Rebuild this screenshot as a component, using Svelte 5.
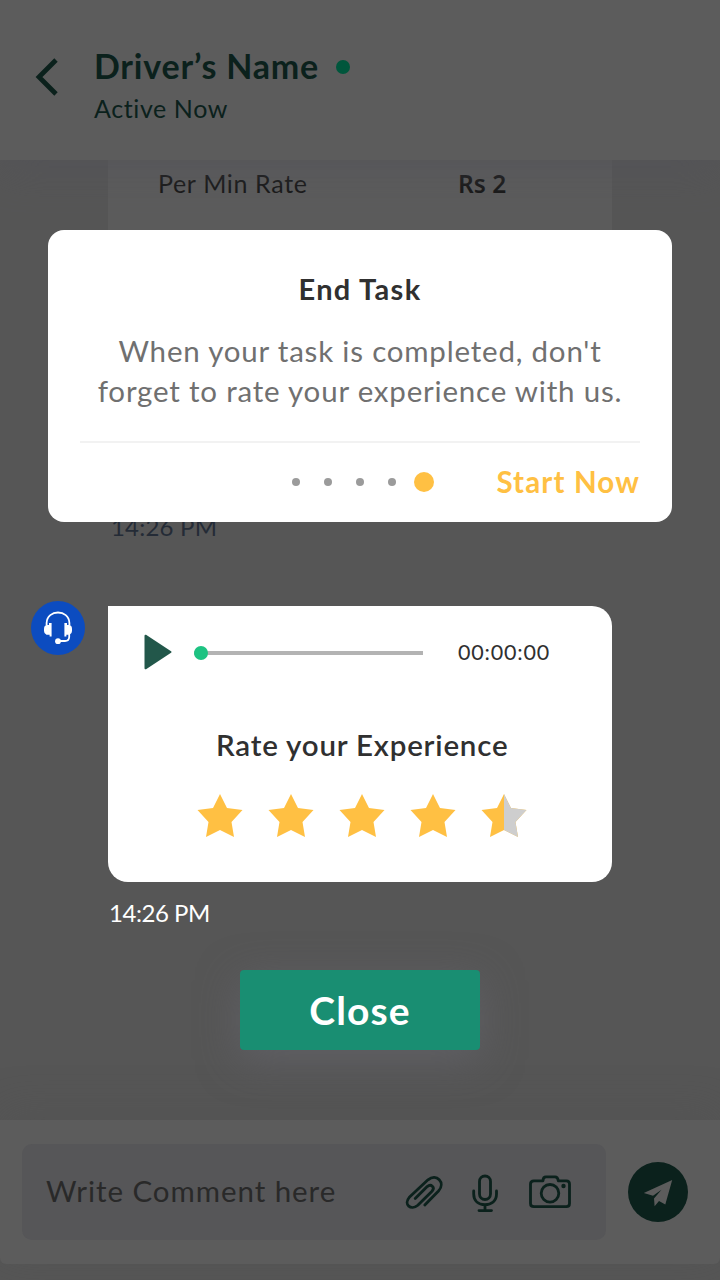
<script>
  const stars = [1, 1, 1, 1, 0.5];
  const steps = [0, 1, 2, 3];
  const starPath = 'M23 0 L30 14 L45.5 16 L34.5 28 L37 43 L23 36 L9 43 L11.5 28 L0.5 16 L16 14 Z';
</script>

<div class="screen">
  <div class="base">
    <header>
      <svg class="back" width="24" height="40" viewBox="0 0 24 40"><path d="M21 3 L4 20 L21 37" fill="none" stroke="#0b211c" stroke-width="4.8" /></svg>
      <div class="who">
        <div class="name-row"><h1>Driver’s Name</h1><i class="online"></i></div>
        <p class="status">Active Now</p>
      </div>
    </header>
    <main>
      <div class="rate"><span class="label">Per Min Rate</span><b>Rs 2</b></div>
      <p class="old-time">14:26 PM</p>
    </main>
    <footer>
      <div class="field">
        <span class="hint">Write Comment here</span>
        <svg width="172" height="48" viewBox="0 0 172 48" fill="none" stroke="#0b211c" stroke-width="2.8" stroke-linecap="round" stroke-linejoin="round">
          <path d="M22.8 37 L36.5 23 C44 14.5 34.5 5 26 11.8 L7.3 29.3 C1.2 36.5 9 43 15.8 37.2 L30 23.2 C33.5 19.3 29 15.2 25.2 18.6 L13.2 30.6" />
          <g transform="translate(.5)">
            <rect x="77" y="8" width="11" height="23.5" rx="5.5" />
            <path d="M71.2 23 V26 C71.2 33 76 36.7 82.5 36.7 S94 33 94 26 V23 M82.5 37 V42.6 M76.5 42.6 H89" />
          </g>
          <g transform="translate(12)">
            <path d="M129 12.8 H120 Q116.5 12.8 116.5 16 V35.5 Q116.5 38.7 120 38.7 H152.3 Q155.5 38.7 155.5 35.5 V16 Q155.5 12.8 152.3 12.8 H144.3 Q143.8 8.9 141 8.9 H132 Q129 8.9 129 12.8" />
            <circle cx="136" cy="25.3" r="8.8" />
            <circle cx="149.5" cy="18" r="1" fill="#0b211c" stroke-width="2.4" />
          </g>
        </svg>
      </div>
      <div class="send">
        <svg width="60" height="60" viewBox="0 0 60 60" fill="#5c5c5c"><path d="M44.2 18 L37.3 42.5 L31 39 L26.6 44.3 L26 36.4 L33.5 27.8 L25 33.8 L15.8 31 Z" /></svg>
      </div>
    </footer>
    <div class="bottom"></div>
  </div>

  <div class="overlay">
    <section class="tip">
      <h2>End Task</h2>
      <p class="body">When your task is completed, don't<br />forget to rate your experience with us.</p>
      <div class="actions">
        <div class="dots">{#each steps as s}<i></i>{/each}<i class="on"></i></div>
        <span class="start">Start Now</span>
      </div>
    </section>

    <div class="message">
      <svg class="avatar" width="54" height="54" viewBox="0 0 54 54">
        <circle cx="27" cy="27" r="27" fill="#0c4cc0" />
        <path d="M15.6 24 V22 C16 8 38 8 38.4 22 V24 M38.2 33 V36 Q38 40 34 40 H27" fill="none" stroke="#fff" stroke-width="1.8" />
        <path d="M15.5 24 H18 V22 H20.6 V35.5 H18.6 V33.7 H15.5 Q13 33 13 30 V28 Q13 24.7 15.5 24 Z M38.5 24 H36 V22 H33.4 V35.5 H35.4 V33.7 H38.5 Q41 33 41 30 V28 Q41 24.7 38.5 24 Z" fill="#fff" />
        <circle cx="27" cy="40.2" r="2.9" fill="#fff" />
      </svg>
      <div class="bubble">
        <div class="player">
          <svg class="play" width="28" height="36" viewBox="0 0 28 36"><path d="M1.5 1.7 L26.5 18 L1.5 34.3 Z" fill="#22574a" stroke="#22574a" stroke-width="2" stroke-linejoin="round" /></svg>
          <div class="track"><i></i></div>
          <span class="clock">00:00:00</span>
        </div>
        <h3>Rate your Experience</h3>
        <div class="stars">
          {#each stars as s}
            <svg width="46" height="44" viewBox="0 0 46 44">
              <path d={starPath} fill="#ffc043" />
              {#if s < 1}<path d="M23 0 L30 14 L45.5 16 L34.5 28 L37 43 L23 36 Z" fill="#cecece" />{/if}
            </svg>
          {/each}
        </div>
      </div>
    </div>
    <p class="time">14:26 PM</p>
    <button>Close</button>
  </div>
</div>

<style>
  :global(body) { margin: 0; background: #565656; }
  h1, h2, h3, p { margin: 0; font-weight: 400; }
  svg { display: block; flex: none; }
  span, h1, h2, h3, p, b { white-space: nowrap; }
  .screen { position: relative; width: 720px; height: 1280px; overflow: hidden; background: #565656; font-family: Lato, sans-serif; }
  .base { height: 100%; display: flex; flex-direction: column; }
  header { box-sizing: border-box; height: 160px; flex: none; display: flex; padding: 45px 0 0 35px; background: #5c5c5c; box-shadow: 0 10px 40px rgba(82, 82, 88, .6); z-index: 1; }
  .back { margin-top: 12px; }
  .who { margin-left: 35px; color: #0b211c; }
  .name-row { display: flex; align-items: center; height: 42px; }
  h1 { font-size: 34px; line-height: 42px; font-weight: 700; letter-spacing: .8px; }
  .online { width: 14px; height: 14px; border-radius: 50%; background: #00563c; margin: 2px 0 0 17px; }
  .status { font-size: 25px; line-height: 42px; letter-spacing: .6px; }
  main { flex: 1; padding-left: 108px; }
  .rate { box-sizing: border-box; width: 504px; height: 320px; background: #5c5c5c; padding: 7px 0 0 50px; display: flex; font-size: 25px; line-height: 32px; color: #161616; }
  .label { width: 300px; letter-spacing: .65px; }
  .rate b { font-family: "Noto Sans", sans-serif; font-size: 24.5px; font-weight: 600; line-height: 33px; }
  .old-time { font-size: 24px; line-height: 32px; padding: 31px 0 0 3px; color: #242b36; letter-spacing: .2px; }
  footer { box-sizing: border-box; height: 144px; flex: none; display: flex; padding: 24px 32px 0 22px; justify-content: space-between; background: #5c5c5c; border-radius: 0 0 6px 6px; box-shadow: 0 -10px 40px rgba(80, 80, 80, .35); }
  .field { box-sizing: border-box; width: 584px; height: 96px; border-radius: 10px; background: #565658; padding: 0 32px 0 24px; display: flex; align-items: center; justify-content: space-between; }
  .hint { font-size: 29.5px; line-height: 36px; margin-top: -2px; color: #292929; letter-spacing: .95px; }
  .send { width: 60px; height: 60px; margin-top: 18px; border-radius: 50%; background: #0b211c; }
  .bottom { height: 16px; flex: none; }

  .overlay { position: absolute; inset: 0; z-index: 2; box-sizing: border-box; padding-top: 230px; display: flex; flex-direction: column; }
  .tip { box-sizing: border-box; width: 624px; height: 292px; margin: 0 48px; padding: 41px 32px 0; border-radius: 16px; background: #fff; text-align: center; }
  h2 { font-size: 29px; line-height: 36px; font-weight: 700; letter-spacing: 1.3px; color: #303030; }
  .body { margin: 24px -10px 0; font-size: 29.5px; line-height: 40px; letter-spacing: .8px; color: #707070; }
  .actions { margin-top: 30px; height: 78px; border-top: 2px solid #f2f2f2; display: flex; align-items: center; justify-content: space-between; padding-left: 212px; }
  .dots { display: flex; align-items: center; gap: 24px; }
  .dots i { width: 8px; height: 8px; border-radius: 50%; background: #9b9b9b; }
  .dots .on { width: 20px; height: 20px; margin-left: -6px; background: #ffc043; }
  .start { font-size: 29.5px; line-height: 36px; margin: -1px 0 0 0; font-weight: 700; letter-spacing: 1.15px; color: #ffc043; }
  .message { display: flex; margin-top: 84px; padding-left: 31px; }
  .avatar { margin-top: -5px; }
  .bubble { box-sizing: border-box; width: 504px; height: 276px; margin-left: 23px; background: #fff; border-radius: 0 20px 20px 20px; padding-top: 28px; }
  .player { display: flex; align-items: center; height: 36px; padding-left: 36px; }
  .track { width: 229px; height: 14px; margin: 2px 0 0 22px; display: flex; align-items: center; background: linear-gradient(#b3b3b3, #b3b3b3) center / 100% 4px no-repeat; }
  .track i { width: 14px; height: 14px; border-radius: 50%; background: #1dc382; }
  .clock { margin-left: 35px; font-size: 21.5px; letter-spacing: .8px; color: #303030; }
  h3 { margin: 55px 0 0 108px; font-size: 29.5px; line-height: 40px; font-weight: 600; letter-spacing: .8px; color: #303030; }
  .stars { display: flex; gap: 25px; margin: 29px 0 0 89px; }
  .time { margin: 14px 0 0 109px; font-size: 24px; line-height: 34px; letter-spacing: -.45px; color: #fff; }
  button { width: 240px; height: 80px; margin: 40px 0 0 240px; padding: 0; border: 0; border-radius: 4px; background: #198e72; color: #fff; font: 700 39px/80px Lato, sans-serif; letter-spacing: 1.1px; box-shadow: 0 10px 40px rgba(106, 106, 116, .5); }
</style>
